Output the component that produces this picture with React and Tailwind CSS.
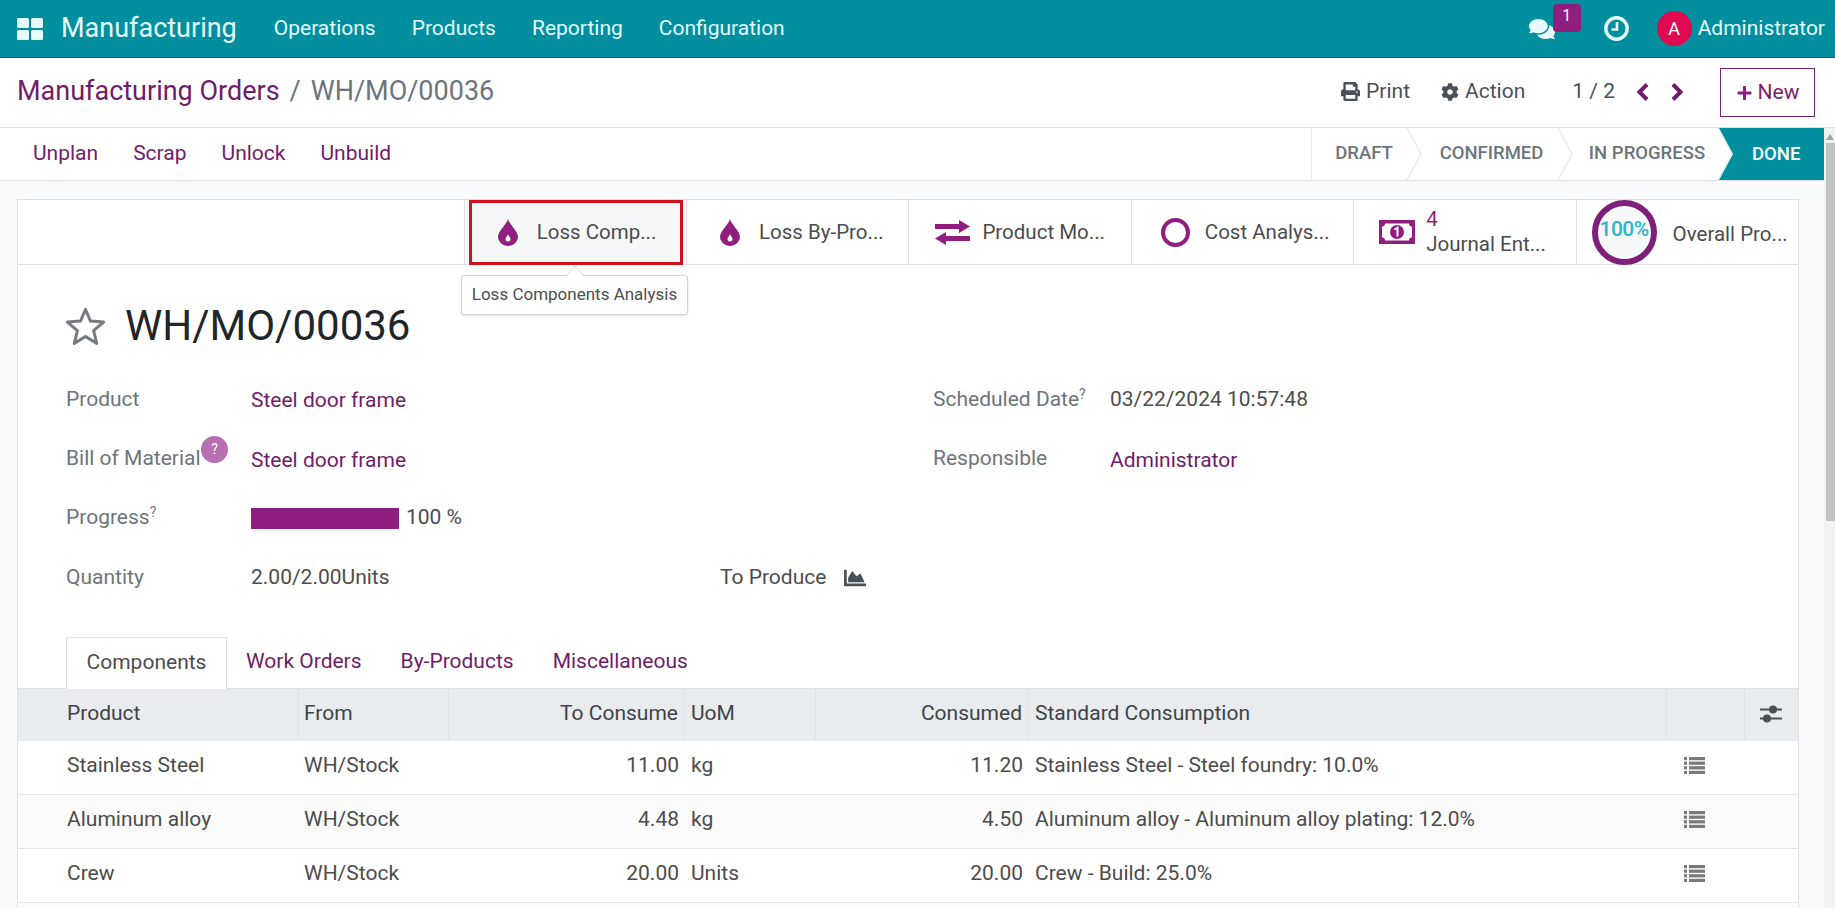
import React from "react";
import { FaPrint, FaCog, FaPlus, FaChartArea, FaComments } from "react-icons/fa";

const font = { fontFamily: "Roboto, sans-serif" };

function NavBar() {
  return (
    <div className="flex h-[58px] items-center justify-between border-b border-[#0b5f68] bg-[#018f9f] text-white">
      <div className="flex items-center">
        {/* apps icon */}
        <svg className="ml-[17px] h-[22px] w-[26px]" viewBox="0 0 26 22" fill="#e6fbfb">
          <rect x="0" y="0" width="12" height="10" rx="1.5" />
          <rect x="14" y="0" width="12" height="10" rx="1.5" />
          <rect x="0" y="12" width="12" height="10" rx="1.5" />
          <rect x="14" y="12" width="12" height="10" rx="1.5" />
        </svg>
        <span className="ml-[18px] text-[27px] text-[#e6fbfb]">Manufacturing</span>
        <div className="ml-[37px] flex gap-[36px] text-[21px] text-[#e6fbfb]">
          <span>Operations</span>
          <span>Products</span>
          <span>Reporting</span>
          <span>Configuration</span>
        </div>
      </div>
      <div className="flex items-center pr-[10px]">
        <div className="relative mr-[49px]">
          <FaComments className="h-[24px] w-[26px] text-[#e6fbfb]" />
          <span className="absolute -top-[13px] left-[24px] flex h-[28px] w-[28px] items-center justify-center rounded-[4px] bg-[#8f1e7f] pb-[3px] text-[16px] text-[#e6fbfb]">
            1
          </span>
        </div>
        <svg className="mr-[28px] h-[25px] w-[25px]" viewBox="0 0 25 25" fill="none" stroke="#e6fbfb">
          <circle cx="12.5" cy="12.5" r="10.7" strokeWidth="3.4" />
          <path d="M13 6 V13.5 H7.5" strokeWidth="2.6" />
        </svg>
        <span className="mr-[6px] flex h-[35px] w-[35px] items-center justify-center rounded-full bg-[#df0a4f] text-[18px]">
          A
        </span>
        <span className="text-[21px] text-[#e6fbfb]">Administrator</span>
      </div>
    </div>
  );
}

function Chevron({ left, className }) {
  return (
    <svg className={"h-[18px] w-[13px] " + className} viewBox="0 0 13 18" fill="none" stroke="#701a6a" strokeWidth="4">
      <path d={left ? "M11 1.5 L3.5 9 L11 16.5" : "M2 1.5 L9.5 9 L2 16.5"} />
    </svg>
  );
}

function Breadcrumb() {
  return (
    <div className="flex h-[70px] items-center justify-between border-b border-[#dee2e6] bg-white">
      <div className="mb-[2px] ml-[17px] flex items-center text-[27px]">
        <span className="text-[#6f1d6b]">Manufacturing Orders</span>
        <span className="ml-[10px] text-[#6c757d]">/</span>
        <span className="ml-[10px] text-[#6c757d]">WH/MO/00036</span>
      </div>
      <div className="mr-[20px] flex items-center text-[21px] text-[#4a5058]">
        <div className="mb-[2px] flex items-center">
          <FaPrint className="mr-[6px] h-[19px] w-[19px]" />
          <span>Print</span>
          <FaCog className="ml-[31px] mr-[6px] h-[18px] w-[18px]" />
          <span>Action</span>
          <span className="ml-[47px]">1 / 2</span>
          <Chevron left className="ml-[21px]" />
          <Chevron className="ml-[22px]" />
        </div>
        <button className="ml-[36px] flex h-[49px] w-[95px] items-center justify-center gap-[5px] border border-[#7a2272] text-[#7a2272]">
          <FaPlus className="h-[16px] w-[17px] text-[#8f1e7f]" />
          New
        </button>
      </div>
    </div>
  );
}

function StatusItem({ label, width, pad }) {
  return (
    <div
      className="relative flex h-full items-center justify-center pb-[1px] text-[18.5px] font-medium text-[#6c757d]"
      style={{ width, paddingLeft: pad }}
    >
      {label}
      <svg className="absolute -right-[14px] top-0 h-full w-[16px]" viewBox="0 0 16 52" fill="none" preserveAspectRatio="none">
        <path d="M1 0 L15 26 L1 52" stroke="#dee2e6" />
      </svg>
    </div>
  );
}

function ActionBar() {
  return (
    <div className="flex h-[53px] items-center justify-between border-b border-[#dee2e6] bg-white">
      <div className="mb-[1px] ml-[33px] flex gap-[35px] text-[21px] text-[#6f1d6b]">
        <span>Unplan</span>
        <span>Scrap</span>
        <span>Unlock</span>
        <span>Unbuild</span>
      </div>
      <div className="flex h-full items-center border-l border-[#e9ecef]">
        <StatusItem label="DRAFT" width={96} pad={8} />
        <StatusItem label="CONFIRMED" width={151} pad={16} />
        <StatusItem label="IN PROGRESS" width={160} pad={16} />
        <svg className="h-full w-[105px]" viewBox="0 0 105 52" preserveAspectRatio="none">
          <path d="M0 0 H105 V52 H0 L14 26 Z" fill="#018f9f" />
          <text x="33" y="32" fontSize="18.5" fontWeight="500" fill="#fff" style={font}>
            DONE
          </text>
        </svg>
      </div>
    </div>
  );
}

function Drop() {
  return (
    <svg className="ml-[33px] mr-[19px] h-[27px] w-[20px]" viewBox="0 0 20 27" fill="#8f1e7f">
      <path d="M10 0 C11 5 20 12 20 18 A10 9 0 0 1 0 18 C0 12 9 5 10 0 Z" />
      <path d="M10 15 C10.5 17 12.5 18.5 12.5 20 A2.5 2.5 0 0 1 7.5 20 C7.5 18.5 9.5 17 10 15 Z" fill="#fff" />
    </svg>
  );
}

function ExchangeIcon() {
  return (
    <svg className="ml-[26px] mr-[12px] h-[25px] w-[35px]" viewBox="0 0 35 25" fill="#8f1e7f">
      <path d="M0 4 H24 V0 L35 6.5 L24 13 V9 H0 Z" />
      <path d="M35 16 H11 V12 L0 18.5 L11 25 V21 H35 Z" />
    </svg>
  );
}

function MoneyIcon() {
  return (
    <svg className="ml-[25px] mr-[11px] h-[24px] w-[36px]" viewBox="0 0 36 24" fill="#8f1e7f">
      <rect x="0" y="0" width="36" height="24" />
      <path d="M6 3.5 H30 A3 3 0 0 0 33 6.5 V17.5 A3 3 0 0 0 30 20.5 H6 A3 3 0 0 0 3 17.5 V6.5 A3 3 0 0 0 6 3.5 Z" fill="#fff" />
      <circle cx="18" cy="12" r="7" />
      <path d="M15.5 9.5 L18.5 7.8 V16.5" fill="none" stroke="#fff" strokeWidth="2" />
    </svg>
  );
}

function StatButton({ icon, children, first }) {
  return (
    <div
      className={
        "flex h-full w-[222.4px] items-center border-l border-[#dee2e6] text-[20.5px] text-[#4c4c4c] " +
        (first ? "bg-[#f6f7f9]" : "")
      }
    >
      {icon}
      {children}
    </div>
  );
}

function ButtonBox() {
  return (
    <div className="relative flex h-[65px] justify-end border-b border-[#dee2e6]">
      <StatButton first icon={<Drop />}>Loss Comp...</StatButton>
      <StatButton icon={<Drop />}>Loss By-Pro...</StatButton>
      <StatButton icon={<ExchangeIcon />}>Product Mo...</StatButton>
      <StatButton
        icon={
          <svg className="ml-[29px] mr-[15px] h-[29px] w-[29px]" viewBox="0 0 29 29" fill="none">
            <circle cx="14.5" cy="14.5" r="12.5" stroke="#8f1e7f" strokeWidth="4" />
          </svg>
        }
      >
        Cost Analys...
      </StatButton>
      <StatButton icon={<MoneyIcon />}>
        <div className="flex flex-col leading-[25px]">
          <span className="text-[#8f1e7f]">4</span>
          <span>Journal Ent...</span>
        </div>
      </StatButton>
      <StatButton
        icon={
          <div className="ml-[15px] mr-[16px] flex h-[65px] w-[65px] items-center justify-center rounded-full border-[6px] border-[#7e2079] bg-[#f6f8fa] pb-[4px] text-[21px] font-medium tracking-tight text-[#2bb5c8]">
            100%
          </div>
        }
      >
        <span className="mt-[4px]">Overall Pro...</span>
      </StatButton>

      {/* red highlight around the first button */}
      <div className="absolute left-[451px] top-0 h-[65px] w-[214px] border-[3px] border-[#d0101a]" />

      {/* tooltip */}
      <div className="absolute left-[443px] top-[75px] z-10 flex h-[40px] w-[227px] items-center justify-center rounded-[3px] border border-[#ced4da] bg-white text-[17px] text-[#4c4c4c] shadow-sm">
        Loss Components Analysis
        <svg className="absolute -top-[10px] left-[104px] h-[10px] w-[18px]" viewBox="0 0 18 10">
          <path d="M0 10 L9 0 L18 10 Z" fill="#fff" />
          <path d="M0 10 L9 0 L18 10" fill="none" stroke="#ced4da" />
        </svg>
      </div>
    </div>
  );
}

function Field({ label, sup, badge, children, labelWidth = "w-[185px]" }) {
  return (
    <div className="flex h-[59.3px] items-center text-[21px]">
      <div className={labelWidth + " relative text-[#6c757d]"}>
        {label}
        {sup && <sup className="text-[14px] text-[#6c757d]">?</sup>}
        {badge && (
          <span className="absolute left-[135px] -top-[7px] flex h-[27px] w-[27px] items-center justify-center rounded-full bg-[#b76fb2] text-[14px] text-white">
            ?
          </span>
        )}
      </div>
      {children}
    </div>
  );
}

function Fields() {
  const link = "mt-[3px] text-[#6f1d6b]";
  return (
    <div className="ml-[48px] flex">
      <div className="w-[867px]">
        <Field label="Product">
          <span className={link}>Steel door frame</span>
        </Field>
        <Field label="Bill of Material" badge>
          <span className={link}>Steel door frame</span>
        </Field>
        <Field label="Progress" sup>
          <div className="h-[21px] w-[148px] bg-[#8f1e7f]" />
          <span className="ml-[7px] text-[#4c4c4c]">100 %</span>
        </Field>
        <Field label="Quantity">
          <span className="w-[469px] text-[#4c4c4c]">2.00/2.00Units</span>
          <span className="text-[#4c4c4c]">To Produce</span>
          <FaChartArea className="ml-[17px] h-[22px] w-[24px] text-[#495057]" />
        </Field>
      </div>
      <div>
        <Field label="Scheduled Date" sup labelWidth="w-[177px]">
          <span className="text-[#4c4c4c]">03/22/2024 10:57:48</span>
        </Field>
        <Field label="Responsible" labelWidth="w-[177px]">
          <span className={link}>Administrator</span>
        </Field>
      </div>
    </div>
  );
}

function ListIcon() {
  return (
    <svg className="mb-[2px] h-[17px] w-[21px]" viewBox="0 0 21 17" fill="#7a7a7a">
      {[0, 4.6, 9.2, 13.8].map((y) => (
        <g key={y}>
          <rect x="0" y={y} width="3" height="3.2" />
          <rect x="5" y={y} width="16" height="3.2" />
        </g>
      ))}
    </svg>
  );
}

const columns = "grid grid-cols-[281px_150px_235px_132px_212px_639px_78px_54px]";

function HeaderCell({ children, right, className = "pl-[7px]" }) {
  return (
    <div className={"flex items-center border-r border-[#dee2e6] pb-[2px] " + (right ? "justify-end pr-[5px]" : className)}>
      {children}
    </div>
  );
}

function Row({ product, qty, uom, consumed, standard, striped }) {
  return (
    <div className={columns + " h-[54px] items-center border-b border-[#e3e6e9] pb-[3px] text-[21px] text-[#4c4c4c] " + (striped ? "bg-[#fbfbfb]" : "bg-white")}>
      <div className="pl-[49px]">{product}</div>
      <div className="pl-[5px]">WH/Stock</div>
      <div className="pr-[5px] text-right">{qty}</div>
      <div className="pl-[7px]">{uom}</div>
      <div className="pr-[5px] text-right">{consumed}</div>
      <div className="pl-[7px]">{standard}</div>
      <div className="flex pl-[17px]"><ListIcon /></div>
      <div />
    </div>
  );
}

function Components() {
  return (
    <div>
      <div className="flex h-[52px] items-end pl-[48px] text-[21px]">
        <div className="-mb-px flex h-[52px] w-[161px] items-center justify-center border border-b-0 border-[#dee2e6] bg-white pb-[2px] text-[#4c4c4c]">
          Components
        </div>
        <div className="ml-[19px] flex h-[52px] items-center gap-[39px] text-[#6f1d6b]">
          <span>Work Orders</span>
          <span>By-Products</span>
          <span>Miscellaneous</span>
        </div>
      </div>
      <div className={columns + " h-[53px] border-t border-[#dee2e6] bg-[#e9ecef] text-[21px] text-[#3f4347]"}>
        <HeaderCell className="pl-[49px]">Product</HeaderCell>
        <HeaderCell className="pl-[5px]">From</HeaderCell>
        <HeaderCell right>To Consume</HeaderCell>
        <HeaderCell>UoM</HeaderCell>
        <HeaderCell right>Consumed</HeaderCell>
        <HeaderCell>Standard Consumption</HeaderCell>
        <HeaderCell />
        <div className="flex items-center justify-center pb-[2px] pr-[3px]">
          <svg className="h-[18px] w-[22px]" viewBox="0 0 22 18" fill="#495057">
            <rect x="0" y="3.5" width="22" height="2" />
            <circle cx="13" cy="4.5" r="4" />
            <rect x="0" y="12.5" width="22" height="2" />
            <circle cx="7" cy="13.5" r="4" />
          </svg>
        </div>
      </div>
      <Row product="Stainless Steel" qty="11.00" uom="kg" consumed="11.20" standard="Stainless Steel - Steel foundry: 10.0%" />
      <Row striped product="Aluminum alloy" qty="4.48" uom="kg" consumed="4.50" standard="Aluminum alloy - Aluminum alloy plating: 12.0%" />
      <Row product="Crew" qty="20.00" uom="Units" consumed="20.00" standard="Crew - Build: 25.0%" />
      <div className="h-[54px] bg-[#fbfbfb]" />
    </div>
  );
}

function Scrollbar() {
  return (
    <div className="flex w-[11px] flex-col items-center bg-[#f1f2f3]">
      <svg className="mt-[6px] h-[6px] w-[8px]" viewBox="0 0 8 6" fill="#a3a3a3">
        <path d="M4 0 L8 6 H0 Z" />
      </svg>
      <div className="ml-[2px] mt-[3px] h-[378px] w-[9px] bg-[#c1c1c1]" />
    </div>
  );
}

export default function App() {
  return (
    <div className="flex h-[908px] w-[1835px] flex-col overflow-hidden bg-[#f9fafb]" style={font}>
      <NavBar />
      <Breadcrumb />
      <div className="flex min-h-0 flex-1">
        <div className="w-[1824px]">
          <ActionBar />
          <div className="ml-[17px] mt-[18px] w-[1782px] border-x border-t border-[#dee2e6] bg-white">
            <ButtonBox />
            <div className="flex items-center pl-[48px] pt-[36px]">
              {/* star outline */}
              <svg className="h-[37px] w-[39px]" viewBox="0 0 39 37" fill="none" stroke="#777b80" strokeWidth="3" strokeLinejoin="round">
                <polygon points="19.5,1.5 24.5,13.1 37.6,14.1 27.6,22.6 30.7,35.4 19.5,28.5 8.3,35.4 11.4,22.6 1.4,14.1 14.5,13.1" />
              </svg>
              <h1 className="ml-[20px] text-[42px] leading-[50px] text-[#212529]">WH/MO/00036</h1>
            </div>
            <div className="mt-[19px]">
              <Fields />
            </div>
            <div className="mt-[29px]">
              <Components />
            </div>
          </div>
        </div>
        <Scrollbar />
      </div>
    </div>
  );
}
